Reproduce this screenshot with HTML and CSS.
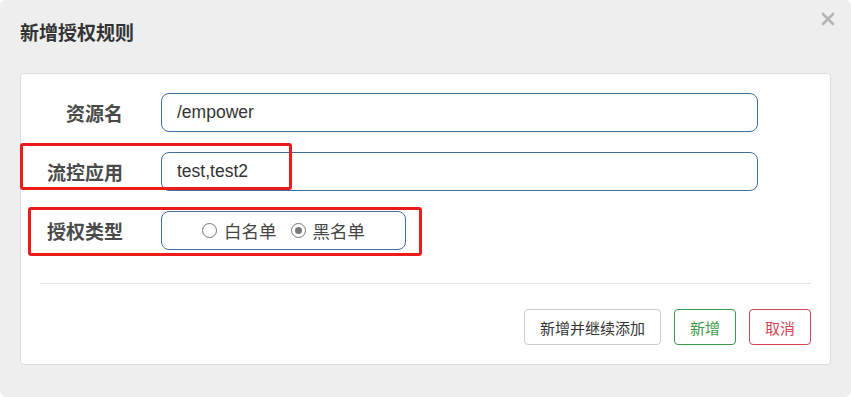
FILE: index.html
```html
<!DOCTYPE html>
<html lang="zh-CN">
  <head>
    <meta charset="UTF-8" />
    <meta name="viewport" content="width=device-width, initial-scale=1.0" />
    <title>新增授权规则</title>
    <link rel="stylesheet" href="styles.css">
  </head>
  <body>
    <div class="dialog">
      <div class="dialog-head">
        <h3 class="title">新增授权规则</h3>
        <button class="close" type="button" aria-label="关闭">
          <svg width="14" height="14" viewBox="0 0 14 14">
            <path d="M2 2 L12 12 M12 2 L2 12" stroke="#b5b5b5" stroke-width="2.6" stroke-linecap="round" />
          </svg>
        </button>
      </div>

      <div class="panel">
        <form class="form">
          <div class="row">
            <label class="label">资源名</label>
            <input class="field" type="text" value="/empower" />
          </div>
          <div class="row">
            <label class="label">流控应用</label>
            <input class="field" type="text" value="test,test2" />
          </div>
          <div class="row">
            <label class="label">授权类型</label>
            <div class="radio-box">
              <label class="radio"><span class="dot"></span>白名单</label>
              <label class="radio"><span class="dot checked"></span>黑名单</label>
            </div>
          </div>
        </form>

        <hr class="divider" />

        <div class="actions">
          <button class="btn btn-default" type="button">新增并继续添加</button>
          <button class="btn btn-success" type="button">新增</button>
          <button class="btn btn-danger" type="button">取消</button>
        </div>

        <!-- 标注框 -->
        <div class="mark mark-app"></div>
        <div class="mark mark-type"></div>
      </div>
    </div>
  </body>
</html>
```

FILE: styles.css
```css
body {
  margin: 0;
  padding: 0;
  background-color: #fff;
  font-family: "Liberation Sans", "Noto Sans CJK SC", sans-serif;
}
.dialog {
  width: 851px;
  height: 397px;
  box-sizing: border-box;
  background-color: #eeeeee;
  border-radius: 6px;
  overflow: hidden;
}
.dialog-head {
  display: flex;
  justify-content: space-between;
  align-items: flex-start;
  padding: 20px 16px 29px 20px;
}
.title {
  margin: 0;
  font-family: "Noto Sans CJK SC", sans-serif;
  font-size: 19px;
  line-height: 24px;
  font-weight: bold;
  color: #333;
}
.close {
  margin-top: -8px;
  padding: 0;
  border: none;
  background: none;
  width: 14px;
  height: 14px;
  cursor: pointer;
}
.panel {
  position: relative;
  margin: 0 20px;
  padding: 19px 19px 19px;
  background-color: #fff;
  border: 1px solid #dcdcdc;
  border-radius: 4px;
}
.row {
  display: flex;
  align-items: center;
  height: 39px;
  margin-bottom: 20px;
}
.row:last-child {
  margin-bottom: 0;
}
.label {
  width: 83px;
  margin-right: 38px;
  text-align: right;
  font-family: "Noto Sans CJK SC", sans-serif;
  font-size: 19px;
  font-weight: bold;
  color: #4a4a4a;
}
.field {
  width: 597px;
  height: 39px;
  box-sizing: border-box;
  padding: 0 15px;
  border: 1px solid #3f6f9f;
  border-radius: 8px;
  font-family: "Liberation Sans", "Noto Sans CJK SC", sans-serif;
  font-size: 17.5px;
  color: #333;
  outline: none;
}
.radio-box {
  display: flex;
  justify-content: center;
  align-items: center;
  gap: 14px;
  width: 245px;
  height: 39px;
  box-sizing: border-box;
  border: 1px solid #3f6f9f;
  border-radius: 8px;
}
.radio {
  display: flex;
  align-items: center;
  font-family: "Noto Sans CJK SC", sans-serif;
  font-size: 17.5px;
  color: #444;
}
.dot {
  position: relative;
  width: 15px;
  height: 15px;
  margin-right: 7px;
  box-sizing: border-box;
  border: 1px solid #767676;
  border-radius: 50%;
}
.dot.checked::after {
  content: "";
  position: absolute;
  top: 3px;
  left: 3px;
  width: 7px;
  height: 7px;
  border-radius: 50%;
  background-color: #767676;
}
.divider {
  margin: 33px 0 0;
  border: none;
  border-top: 1px solid #e5e5e5;
}
.actions {
  display: flex;
  justify-content: flex-end;
  gap: 13px;
  margin-top: 25px;
}
.btn {
  height: 36px;
  padding: 0 15px;
  background-color: #fff;
  border-radius: 4px;
  font-family: "Noto Sans CJK SC", sans-serif;
  font-size: 15px;
  cursor: pointer;
}
.btn-default {
  border: 1px solid #cccccc;
  color: #333;
}
.btn-success {
  border: 1px solid #3a9a4a;
  color: #3a9a4a;
}
.btn-danger {
  border: 1px solid #d34456;
  color: #d34456;
}
.mark {
  position: absolute;
  border: 3px solid #ec1c1c;
  border-radius: 3px;
  box-sizing: border-box;
}
.mark-app {
  left: -1px;
  top: 69px;
  width: 272px;
  height: 47px;
}
.mark-type {
  left: 7px;
  top: 133px;
  width: 394px;
  height: 49px;
}
```
